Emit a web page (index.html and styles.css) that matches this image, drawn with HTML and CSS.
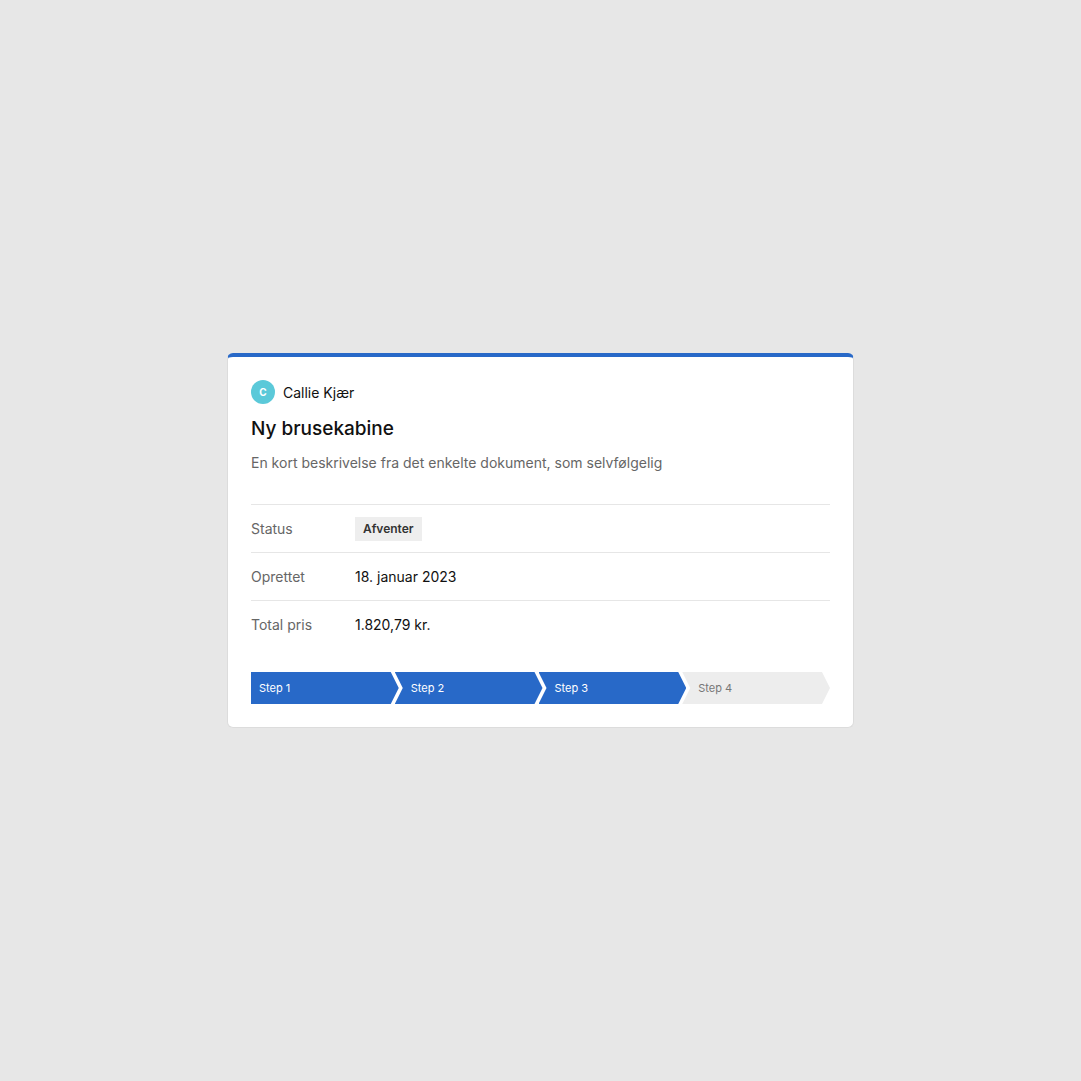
FILE: index.html
```
<!DOCTYPE html>
<html lang="da">
<head>
    <meta charset="UTF-8">
    <meta name="viewport" content="width=device-width, initial-scale=1.0">
    <title>Ny brusekabine</title>
    <link rel="stylesheet" href="styles.css">
</head>
<body>
    <div class="page">
        <div class="doc-card">
            <div class="owner">
                <span class="avatar">C</span>
                <span class="owner-name">Callie Kjær</span>
            </div>
            <h2 class="doc-title">Ny brusekabine</h2>
            <p class="doc-desc">En kort beskrivelse fra det enkelte dokument, som selvfølgelig</p>

            <div class="details">
                <div class="detail-row">
                    <div class="detail-label">Status</div>
                    <div class="detail-value"><span class="badge">Afventer</span></div>
                </div>
                <div class="detail-row">
                    <div class="detail-label">Oprettet</div>
                    <div class="detail-value">18. januar 2023</div>
                </div>
                <div class="detail-row">
                    <div class="detail-label">Total pris</div>
                    <div class="detail-value">1.820,79 kr.</div>
                </div>
            </div>

            <div class="steps">
                <div class="step done">Step 1</div>
                <div class="step done">Step 2</div>
                <div class="step done">Step 3</div>
                <div class="step">Step 4</div>
            </div>
        </div>
    </div>
</body>
</html>
```

FILE: styles.css
```
body, html {
    margin: 0;
    height: 100%;
    font-family: Inter, 'Liberation Sans', Arial, sans-serif;
    background-color: #e7e7e7;
    color: #111;
}
.page {
    height: 100%;
    display: flex;
    align-items: center;
    justify-content: center;
}
.doc-card {
    width: 579px;
    background: #fff;
    border: 1px solid #dcdcdc;
    border-top: 4px solid #2869c8;
    border-radius: 6px;
    padding: 23px 23px 23px;
}
.owner {
    display: flex;
    align-items: center;
    gap: 8px;
    height: 24px;
}
.avatar {
    width: 24px;
    height: 24px;
    border-radius: 50%;
    background-color: #5bc9d9;
    color: #fff;
    font-size: 10px;
    font-weight: bold;
    display: flex;
    align-items: center;
    justify-content: center;
}
.owner-name {
    font-size: 14px;
}
.doc-title {
    margin: 11px 0 0;
    font-size: 19px;
    line-height: 28px;
    font-weight: 500;
}
.doc-desc {
    margin: 9px 0 0;
    font-size: 14px;
    line-height: 22px;
    color: #666;
}
.details {
    margin-top: 30px;
}
.detail-row {
    display: flex;
    align-items: center;
    height: 47px;
    border-top: 1px solid #e6e6e6;
    font-size: 14px;
}
.detail-label {
    width: 104px;
    color: #666;
}
.badge {
    display: inline-block;
    background: #eeeeee;
    color: #333;
    font-size: 12px;
    font-weight: 600;
    line-height: 24px;
    padding: 0 8px;
}
.steps {
    display: flex;
    margin-top: 24px;
}
.step {
    flex: 1;
    height: 32px;
    line-height: 32px;
    font-size: 11px;
    text-indent: 16px;
    margin-left: -4px;
    background: #ededed;
    color: #777;
    clip-path: polygon(0 0, calc(100% - 8px) 0, 100% 50%, calc(100% - 8px) 100%, 0 100%, 8px 50%);
}
.step:first-child {
    margin-left: 0;
    text-indent: 8px;
    clip-path: polygon(0 0, calc(100% - 8px) 0, 100% 50%, calc(100% - 8px) 100%, 0 100%);
}
.step.done {
    background: #2869c8;
    color: #fff;
}
```
